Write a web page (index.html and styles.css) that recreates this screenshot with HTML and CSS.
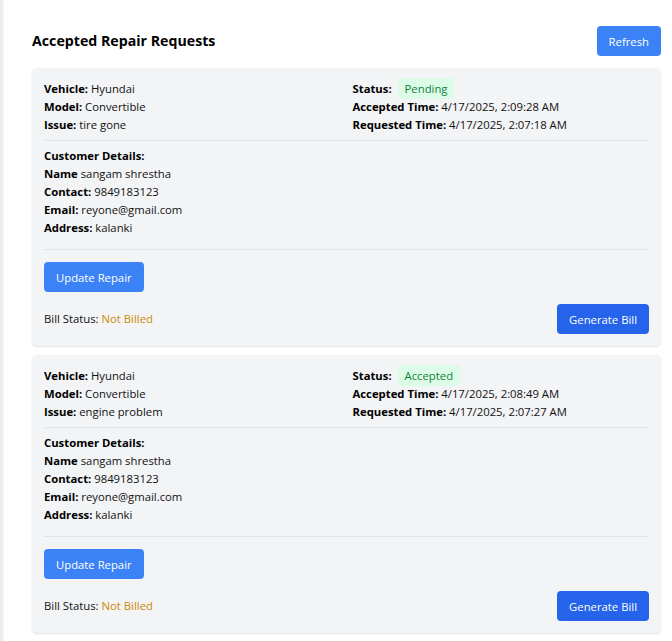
FILE: index.html
```html
<!DOCTYPE html>
<html lang="en">
<head>
<meta charset="utf-8">
<title>Accepted Repair Requests</title>
<link rel="stylesheet" href="styles.css">
</head>
<body>
<div class="layout">
  <div class="edge"></div>
  <main class="main">
    <header class="header">
      <h2 class="title">Accepted Repair Requests</h2>
      <button class="btn btn-light">Refresh</button>
    </header>

    <section class="list">
      <article class="card">
        <div class="grid">
          <div class="col">
            <p><b>Vehicle:</b> Hyundai</p>
            <p><b>Model:</b> Convertible</p>
            <p><b>Issue:</b> tire gone</p>
          </div>
          <div class="col">
            <p><b>Status:</b> <span class="badge">Pending</span></p>
            <p><b>Accepted Time:</b> 4/17/2025, 2:09:28 AM</p>
            <p><b>Requested Time:</b> 4/17/2025, 2:07:18 AM</p>
          </div>
        </div>
        <div class="customer">
          <p><b>Customer Details:</b></p>
          <p><b>Name</b> sangam shrestha</p>
          <p><b>Contact:</b> 9849183123</p>
          <p><b>Email:</b> reyone@gmail.com</p>
          <p><b>Address:</b> kalanki</p>
        </div>
        <div class="actions">
          <button class="btn btn-light">Update Repair</button>
          <div class="bill-row">
            <p class="bill">Bill Status: <span class="not-billed">Not Billed</span></p>
            <button class="btn btn-dark">Generate Bill</button>
          </div>
        </div>
      </article>

      <article class="card">
        <div class="grid">
          <div class="col">
            <p><b>Vehicle:</b> Hyundai</p>
            <p><b>Model:</b> Convertible</p>
            <p><b>Issue:</b> engine problem</p>
          </div>
          <div class="col">
            <p><b>Status:</b> <span class="badge">Accepted</span></p>
            <p><b>Accepted Time:</b> 4/17/2025, 2:08:49 AM</p>
            <p><b>Requested Time:</b> 4/17/2025, 2:07:27 AM</p>
          </div>
        </div>
        <div class="customer">
          <p><b>Customer Details:</b></p>
          <p><b>Name</b> sangam shrestha</p>
          <p><b>Contact:</b> 9849183123</p>
          <p><b>Email:</b> reyone@gmail.com</p>
          <p><b>Address:</b> kalanki</p>
        </div>
        <div class="actions">
          <button class="btn btn-light">Update Repair</button>
          <div class="bill-row">
            <p class="bill">Bill Status: <span class="not-billed">Not Billed</span></p>
            <button class="btn btn-dark">Generate Bill</button>
          </div>
        </div>
      </article>
    </section>
  </main>
</div>
</body>
</html>
```

FILE: styles.css
```css
* { box-sizing: border-box; }
html, body { margin: 0; padding: 0; background: #ffffff; }
body {
  font-family: "Open Sans", "Noto Sans", "Liberation Sans", sans-serif;
  font-size: 11.3px;
  line-height: 18px;
  color: #111111;
}
p { margin: 0; }
b { font-weight: 700; color: #000; }

.layout { display: flex; min-height: 641px; }
.edge {
  width: 4px;
  flex: none;
  background: linear-gradient(to right, #e9e9e9, #f6f6f6);
}
.main {
  flex: 1;
  padding: 26px 11px 0 28px;
}
.header {
  display: flex;
  justify-content: space-between;
  align-items: center;
  height: 30px;
}
.title {
  margin: 0;
  font-size: 14.2px;
  font-weight: 700;
  color: #000;
}
.btn {
  border: none;
  border-radius: 4px;
  height: 30px;
  padding: 0 12px;
  color: #fff;
  font-family: inherit;
  font-size: 11.3px;
  cursor: pointer;
}
.btn-light { background: #3b82f6; }
.btn-dark { background: #2563eb; }

.list {
  margin-top: 12px;
  display: flex;
  flex-direction: column;
  gap: 9px;
}
.card {
  background: #f3f4f6;
  border-radius: 5px;
  padding: 12px;
  box-shadow: 0 1px 2px rgba(0,0,0,0.12);
}
.grid {
  display: grid;
  grid-template-columns: 1fr 1fr;
  gap: 12px;
  padding-bottom: 6px;
  border-bottom: 1px solid #e2e4e8;
}
.badge {
  margin-left: 3px;
  padding: 3px 7px;
  border-radius: 3px;
  background: #dcfce7;
  color: #15803d;
}
.customer {
  padding: 6px 0 12px;
  border-bottom: 1px solid #e2e4e8;
}
.actions { padding-top: 12px; }
.bill-row {
  margin-top: 12px;
  display: flex;
  justify-content: space-between;
  align-items: center;
}
.bill { color: #111; }
.not-billed { color: #ca8a04; }
```
